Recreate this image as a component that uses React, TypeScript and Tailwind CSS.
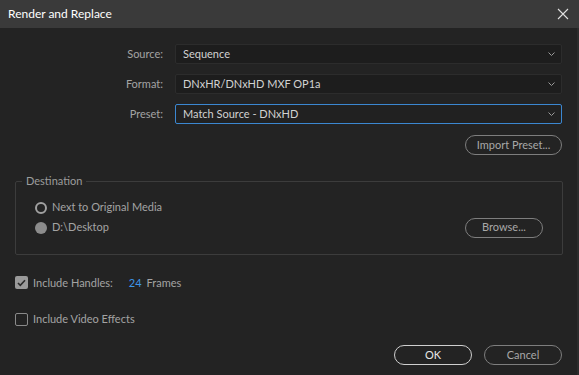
import React from "react";

const font = { fontFamily: "Lato, 'Noto Sans', sans-serif" };

function Chevron() {
  return (
    <svg width="9" height="6" viewBox="0 0 9 6" className="text-[#9a9a9a]">
      <path d="M1.5 1.5l3 3 3-3" fill="none" stroke="currentColor" strokeWidth="1" />
    </svg>
  );
}

function Select({ value, focused }: { value: string; focused?: boolean }) {
  return (
    <div
      className={`flex h-[20px] items-center justify-between rounded-[2px] border pl-[7px] pr-[5px] text-[11px] text-[#d2d2d2] ${
        focused ? "border-[#3b87d1] bg-[#212121]" : "border-[#2c2c2c] bg-[#1d1d1d]"
      }`}
    >
      <span>{value}</span>
      <Chevron />
    </div>
  );
}

function PillButton({ label, strong, w }: { label: string; strong?: boolean; w: string }) {
  return (
    <button
      className={`flex h-[20px] items-center justify-center rounded-full border text-[11px] ${w} ${
        strong ? "border-[#cfcfcf] text-[#e6e6e6]" : "border-[#7e7e7e] text-[#a8a8a8]"
      }`}
    >
      {label}
    </button>
  );
}

function Checkbox({ checked }: { checked?: boolean }) {
  return checked ? (
    <span className="flex h-[13px] w-[13px] items-center justify-center rounded-[2px] bg-[#9a9a9a]">
      <svg width="9" height="8" viewBox="0 0 9 8">
        <path d="M1 4l2.3 2.3L8 1.2" fill="none" stroke="#2a2a2a" strokeWidth="1.6" />
      </svg>
    </span>
  ) : (
    <span className="h-[13px] w-[13px] rounded-[2px] border border-[#8a8a8a]" />
  );
}

export default function App() {
  const rows = [
    { label: "Source:", value: "Sequence" },
    { label: "Format:", value: "DNxHR/DNxHD MXF OP1a" },
    { label: "Preset:", value: "Match Source - DNxHD", focused: true },
  ];
  return (
    <div className="flex h-[375px] w-[579px] flex-col bg-[#232323]" style={font}>
      <div className="flex h-[28px] shrink-0 items-center justify-between bg-[#3a3a3a] pl-[8px] pr-[10px]">
        <span className="text-[12px] text-white">Render and Replace</span>
        <svg width="12" height="12" viewBox="0 0 12 12">
          <path d="M1 1l10 10M11 1L1 11" stroke="#e0e0e0" strokeWidth="1.1" />
        </svg>
      </div>
      <div className="flex flex-1 flex-col border-r-2 border-[#2c2c2c] pl-[15px] pr-[15px]">
        <div className="mt-[16px] grid grid-cols-[148px_1fr] gap-x-[12px] gap-y-[10px]">
          {rows.map((r) => (
            <React.Fragment key={r.label}>
              <span className="self-center text-right text-[11px] text-[#a3a3a3]">{r.label}</span>
              <Select value={r.value} focused={r.focused} />
            </React.Fragment>
          ))}
        </div>
        <div className="mt-[11px] flex justify-end">
          <PillButton label="Import Preset..." w="w-[97px]" />
        </div>
        <fieldset className="mt-[18px] mr-[-1px] rounded-[2px] border border-[#3c3c3c] pb-[16px] pl-[6px] pr-[19px]">
          <legend className="px-[4px] text-[11px] text-[#9c9c9c]">Destination</legend>
          <div className="mt-[12px] flex flex-col gap-y-[4px] pl-[13px]">
            <div className="flex h-[12px] items-center gap-[5px]">
              <span className="h-[12px] w-[12px] rounded-full border-2 border-[#a0a0a0]" />
              <span className="text-[11px] text-[#a3a3a3]">Next to Original Media</span>
            </div>
            <div className="flex items-center justify-between">
              <div className="flex h-[12px] items-center gap-[5px]">
                <span className="h-[12px] w-[12px] rounded-full bg-[#8c8c8c]" />
                <span className="text-[11px] text-[#a3a3a3]">D:\Desktop</span>
              </div>
              <PillButton label="Browse..." w="w-[78px]" />
            </div>
          </div>
        </fieldset>
        <div className="mt-[20px] flex items-center gap-[5px] text-[11px] text-[#a3a3a3]">
          <Checkbox checked />
          <span>Include Handles:</span>
          <span className="ml-[11px] text-[#3d95e8]">24</span>
          <span>Frames</span>
        </div>
        <div className="mt-[20px] flex items-center gap-[5px] text-[11px] text-[#a3a3a3]">
          <Checkbox />
          <span>Include Video Effects</span>
        </div>
        <div className="mt-auto mb-[10px] flex justify-end gap-[12px]">
          <PillButton label="OK" strong w="w-[78px]" />
          <PillButton label="Cancel" w="w-[78px]" />
        </div>
      </div>
    </div>
  );
}
